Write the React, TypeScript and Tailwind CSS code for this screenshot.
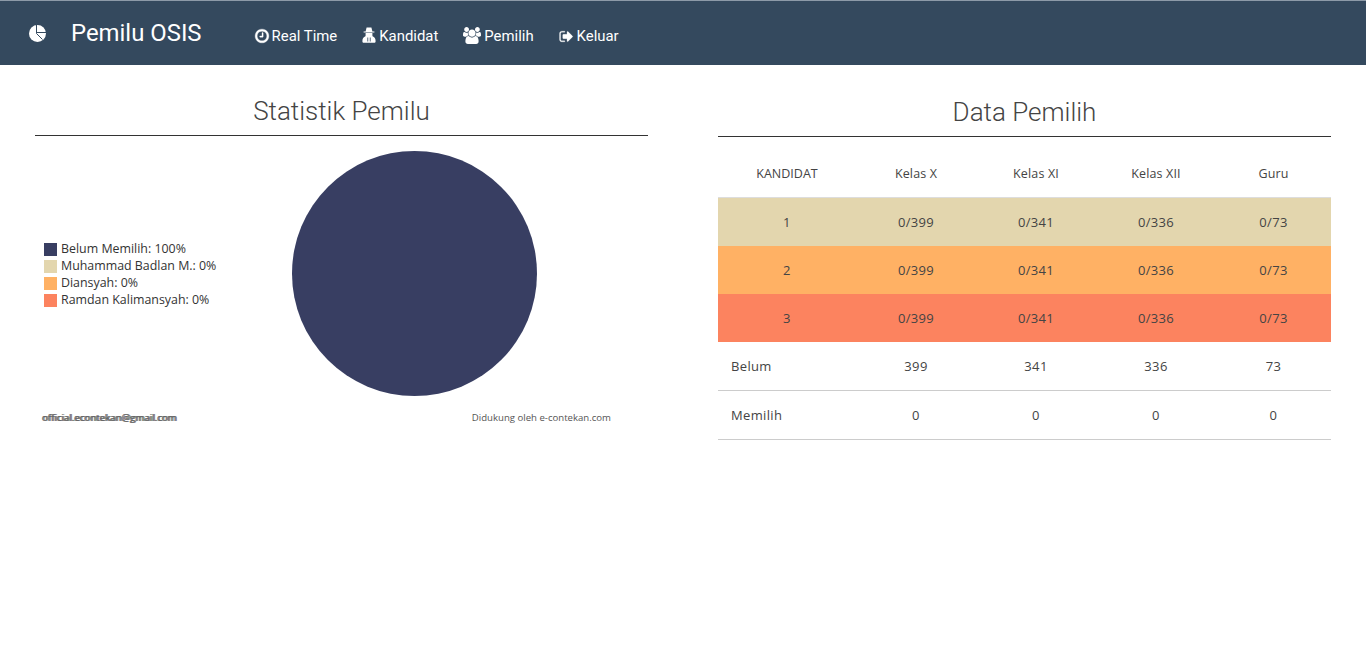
import { FC, ReactNode } from "react";

const legend = [
  { label: "Belum Memilih: 100%", color: "bg-[#383e62]" },
  { label: "Muhammad Badlan M.: 0%", color: "bg-[#e3d6ae]" },
  { label: "Diansyah: 0%", color: "bg-[#ffb164]" },
  { label: "Ramdan Kalimansyah: 0%", color: "bg-[#fc835f]" },
];

const kandidat = [
  { no: "1", color: "bg-[#e3d6ae]", height: "h-[49px]" },
  { no: "2", color: "bg-[#ffb164]", height: "h-[48px]" },
  { no: "3", color: "bg-[#fc835f]", height: "h-[48px]" },
];

const PieIcon = () => (
  <svg viewBox="0 0 19 19" className="size-[19px]">
    <circle cx="9.5" cy="9.5" r="8.5" fill="white" />
    <path d="M8.5 0.5V9.5L14.5 15.5M8.5 8.5H18.5" fill="none" stroke="#34495e" strokeWidth="1" />
  </svg>
);

const ClockIcon = () => (
  <svg viewBox="0 0 1792 1792" className="size-[16px] -mr-px" fill="white" stroke="white" strokeWidth="40">
    <path d="M1024 544v448q0 14-9 23t-23 9h-320q-14 0-23-9t-9-23v-64q0-14 9-23t23-9h224v-352q0-14 9-23t23-9h64q14 0 23 9t9 23zm416 352q0-148-73-273t-198-198-273-73-273 73-198 198-73 273 73 273 198 198 273 73 273-73 198-198 73-273zm224 0q0 209-103 385.5t-279.5 279.5-385.5 103-385.5-103-279.5-279.5-103-385.5 103-385.5 279.5-279.5 385.5-103 385.5 103 279.5 279.5 103 385.5z" />
  </svg>
);

const SecretIcon = () => (
  <svg viewBox="0 0 14 16" className="w-[14px] h-[16px] -mt-[2px]" fill="white">
    <path d="M4.6 0.5H9.4L10.4 4.4H12.4V5.4H1.6V4.4H3.6Z" />
    <path fillRule="evenodd" d="M3.6 6H10.4V8.4C10.4 9 10.6 9.4 11 9.6C12.8 10.2 13.6 12 13.6 14.2C13.6 15.2 13 15.8 12.2 15.8H1.8C1 15.8 0.4 15.2 0.4 14.2C0.4 12 1.2 10.2 3 9.6C3.4 9.4 3.6 9 3.6 8.4ZM5.4 10.6V14.6H6.2V10.6ZM7.8 10.6V14.6H8.6V10.6Z" />
  </svg>
);

const UsersIcon = () => (
  <svg viewBox="0 0 1920 1792" className="w-[18px] h-[17px] -mt-[2px]" fill="white">
    <path d="M593 896q-162 5-265 128h-134q-82 0-138-40.5t-56-118.5q0-353 124-353 6 0 43.5 21t97.5 42.5 119 21.5q67 0 133-23-5 37-5 66 0 139 81 256zm1071 637q0 120-73 189.5t-194 69.5h-874q-121 0-194-69.5t-73-189.5q0-53 3.5-103.5t14-109 26.5-108.5 43-97.5 62-81 85.5-53.5 111.5-20q10 0 43 21.5t73 48 107 48 135 21.5 135-21.5 107-48 73-48 43-21.5q61 0 111.5 20t85.5 53.5 62 81 43 97.5 26.5 108.5 14 109 3.5 103.5zm-1024-1277q0 106-75 181t-181 75-181-75-75-181 75-181 181-75 181 75 75 181zm704 384q0 159-112.5 271.5t-271.5 112.5-271.5-112.5-112.5-271.5 112.5-271.5 271.5-112.5 271.5 112.5 112.5 271.5zm576 225q0 78-56 118.5t-138 40.5h-134q-103-123-265-128 81-117 81-256 0-29-5-66 66 23 133 23 59 0 119-21.5t97.5-42.5 43.5-21q124 0 124 353zm-128-609q0 106-75 181t-181 75-181-75-75-181 75-181 181-75 181 75 75 181z" />
  </svg>
);

const SignOutIcon = () => (
  <svg viewBox="0 0 1792 1792" className="size-[15px]" fill="white" stroke="white" strokeWidth="30">
    <path d="M704 1440q0 4 1 20t.5 26.5-3 23.5-10 19.5-20.5 6.5h-320q-119 0-203.5-84.5t-84.5-203.5v-704q0-119 84.5-203.5t203.5-84.5h320q13 0 22.5 9.5t9.5 22.5q0 4 1 20t.5 26.5-3 23.5-10 19.5-20.5 6.5h-320q-66 0-113 47t-47 113v704q0 66 47 113t113 47h312l11.5 1 11.5 3 8 5.5 7 9 2 13.5zm928-544q0 26-19 45l-544 544q-19 19-45 19t-45-19-19-45v-288h-448q-26 0-45-19t-19-45v-384q0-26 19-45t45-19h448v-288q0-26 19-45t45-19 45 19l544 544q19 19 19 45z" />
  </svg>
);

const NavItem: FC<{ icon: ReactNode; label: string }> = ({ icon, label }) => (
  <a className="flex items-center gap-[3px] text-[14.9px] text-white font-['Roboto',sans-serif]">
    {icon}
    {label}
  </a>
);

const Title: FC<{ children: ReactNode; extra?: string }> = ({ children, extra }) => (
  <h2 className={`text-center text-[26px] leading-[36px] font-light text-[#444] font-['Roboto',sans-serif] border-b border-[#333] ${extra ?? "pb-[6px]"}`}>{children}</h2>
);

export default function App() {
  return (
    <div className="min-h-[655px] bg-white font-['Open_Sans',sans-serif] text-[#333]">
      <nav className="flex items-center h-[65px] bg-[#34495e] border-t border-[#8d9aa8] pl-[28px]">
        <PieIcon />
        <span className="ml-[24px] pt-[1px] text-[23.9px] text-white font-['Roboto',sans-serif]">Pemilu OSIS</span>
        <div className="flex items-center gap-[25px] ml-[52px] pt-[7px]">
          <NavItem icon={<ClockIcon />} label="Real Time" />
          <NavItem icon={<SecretIcon />} label="Kandidat" />
          <NavItem icon={<UsersIcon />} label="Pemilih" />
          <NavItem icon={<SignOutIcon />} label="Keluar" />
        </div>
      </nav>

      <main className="grid grid-cols-2 gap-[70px] px-[35px] pt-[28px]">
        <section>
          <Title>Statistik Pemilu</Title>
          <div className="relative flex items-center h-[246px] mt-[15px] pl-[9px] pt-[2px]">
            <ul className="flex flex-col">
              {legend.map((l) => (
                <li key={l.label} className="flex items-center h-[17px] text-[12.4px] text-[#333]">
                  <span className={`size-[13px] mr-[4px] ${l.color}`} />
                  {l.label}
                </li>
              ))}
            </ul>
            <svg viewBox="0 0 245 245" className="absolute left-[257px] top-0 size-[245px]">
              <circle cx="122.5" cy="122.5" r="122.5" fill="#383e62" />
            </svg>
          </div>
          <div className="flex justify-between items-center mt-[14px] pl-[7px] pr-[37px] text-[#555]">
            <span className="text-[9.7px] text-[#666] [text-shadow:1px_0_#666,-0.5px_0_#888]">official.econtekan@gmail.com</span>
            <span className="text-[9.6px]">Didukung oleh e-contekan.com</span>
          </div>
        </section>

        <section>
          <Title extra="pt-[1px] pb-[6px]">Data Pemilih</Title>
          <table className="w-full table-fixed mt-[14px] text-[13px] tracking-[0.35px] text-center text-[#444]">
            <colgroup>
              <col className="w-[138px]" />
              <col className="w-[120px]" />
              <col className="w-[120px]" />
              <col className="w-[120px]" />
              <col />
            </colgroup>
            <thead>
              <tr className="h-[46px] border-b border-[#ddd] text-[12.5px] tracking-[0.15px]">
                <th className="font-normal tracking-normal pt-[2px]">KANDIDAT</th>
                <th className="font-normal pt-[1px]">Kelas X</th>
                <th className="font-normal pt-[1px]">Kelas XI</th>
                <th className="font-normal pt-[1px]">Kelas XII</th>
                <th className="font-normal pt-[1px]">Guru</th>
              </tr>
            </thead>
            <tbody>
              {kandidat.map((k) => (
                <tr key={k.no} className={`${k.color} ${k.height}`}>
                  <td className="pt-[2px]">{k.no}</td>
                  <td className="pt-[2px]">0/399</td>
                  <td className="pt-[2px]">0/341</td>
                  <td className="pt-[2px]">0/336</td>
                  <td className="pt-[2px]">0/73</td>
                </tr>
              ))}
              <tr className="h-[48px] border-b border-[#ccc]">
                <td className="text-left pl-[13px] pt-[1px]">Belum</td>
                <td className="pt-[1px]">399</td>
                <td className="pt-[1px]">341</td>
                <td className="pt-[1px]">336</td>
                <td className="pt-[1px]">73</td>
              </tr>
              <tr className="h-[49px] border-b border-[#ccc]">
                <td className="text-left pl-[13px] pt-[2px]">Memilih</td>
                <td className="pt-[2px]">0</td>
                <td className="pt-[2px]">0</td>
                <td className="pt-[2px]">0</td>
                <td className="pt-[2px]">0</td>
              </tr>
            </tbody>
          </table>
        </section>
      </main>
    </div>
  );
}
